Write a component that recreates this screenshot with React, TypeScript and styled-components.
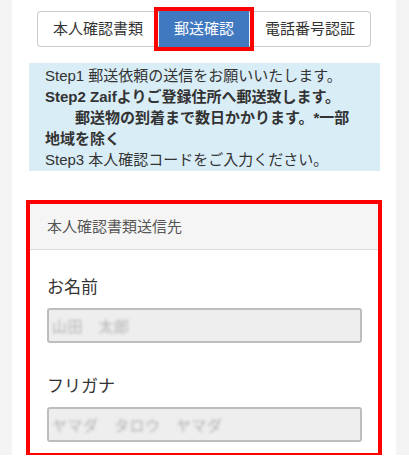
import React from "react";
import styled, { createGlobalStyle } from "styled-components";

const GlobalStyle = createGlobalStyle`
  html, body {
    margin: 0;
    padding: 0;
    background: #ffffff;
  }
  body {
    font-family: "Liberation Sans", "Noto Sans CJK JP", sans-serif;
    color: #333333;
  }
`;

const Page = styled.div`
  background: #f4f4f4;
  height: 455px;
  padding: 0 13px 0 12px;
`;

const Column = styled.main`
  background: #ffffff;
  height: 100%;
  padding-top: 11px;
  box-sizing: border-box;
  display: flex;
  flex-direction: column;
  align-items: center;
`;

const TabGroup = styled.div`
  display: flex;
  height: 36px;
`;

const Tab = styled.button<{ $active?: boolean; $pos: "first" | "mid" | "last" }>`
  font-family: "Liberation Sans", "Noto Sans CJK JP", sans-serif;
  font-size: 15px;
  line-height: 20px;
  padding: 0 15px;
  margin: 0;
  box-sizing: border-box;
  height: 36px;
  cursor: pointer;
  background: ${(p) => (p.$active ? "#4079c0" : "#ffffff")};
  color: ${(p) => (p.$active ? "#ffffff" : "#333333")};
  border: 1px solid ${(p) => (p.$active ? "#4079c0" : "#cccccc")};
  border-left-color: ${(p) => (p.$active ? "#eef3fa" : "#cccccc")};
  border-right-color: ${(p) => (p.$active ? "#eef3fa" : "#cccccc")};
  border-radius: ${(p) =>
    p.$pos === "first" ? "4px 0 0 4px" : p.$pos === "last" ? "0 4px 4px 0" : "0"};
  ${(p) => (p.$pos === "last" ? "border-left: none;" : "")}
  ${(p) => (p.$pos === "first" ? "border-right: none;" : "")}
  outline: ${(p) => (p.$active ? "4px solid #ff0000" : "none")};
  outline-offset: 0;
  position: relative;
  z-index: ${(p) => (p.$active ? 1 : 0)};
`;

const InfoBox = styled.div`
  margin-top: 16px;
  align-self: stretch;
  margin-left: 17px;
  margin-right: 16px;
  background: #d9edf7;
  padding: 2px 16px 1px 16px;
  font-size: 15px;
  line-height: 21px;
  color: #333333;
`;

const StepLine = styled.div<{ $bold?: boolean }>`
  font-weight: ${(p) => (p.$bold ? 700 : 400)};
  white-space: nowrap;
`;

const Card = styled.section`
  margin-top: 29px;
  align-self: stretch;
  margin-left: 14px;
  margin-right: 14px;
  border: 4px solid #ff0000;
  background: #ffffff;
`;

const CardHeader = styled.div`
  background: #f5f5f5;
  border-bottom: 1px solid #dddddd;
  padding: 12px 17px;
  font-size: 15px;
  line-height: 21px;
  color: #555555;
`;

const CardBody = styled.div`
  padding: 26px 16px 11px 17px;
  display: flex;
  flex-direction: column;
`;

const Field = styled.div<{ $gap?: boolean }>`
  display: flex;
  flex-direction: column;
  margin-top: ${(p) => (p.$gap ? "32px" : "0")};
`;

const Label = styled.label`
  font-size: 17px;
  line-height: 24px;
  color: #333333;
  margin-bottom: 8px;
`;

const Input = styled.div`
  height: 35px;
  box-sizing: border-box;
  background: #eeeeee;
  border: 2px solid #bdbdbd;
  border-radius: 3px;
  display: flex;
  align-items: center;
  padding-left: 3px;
  overflow: hidden;
`;

const Masked = styled.span`
  font-size: 15px;
  color: #b0b0b0;
  filter: blur(1.4px);
  letter-spacing: 0.5px;
  white-space: nowrap;
`;

export default function App() {
  return (
    <>
      <GlobalStyle />
      <Page>
        <Column>
          <TabGroup>
            <Tab $pos="first">本人確認書類</Tab>
            <Tab $pos="mid" $active>
              郵送確認
            </Tab>
            <Tab $pos="last">電話番号認証</Tab>
          </TabGroup>
          <InfoBox>
            <StepLine>Step1 郵送依頼の送信をお願いいたします。</StepLine>
            <StepLine $bold>Step2 Zaifよりご登録住所へ郵送致します。</StepLine>
            <StepLine $bold>　　郵送物の到着まで数日かかります。*一部</StepLine>
            <StepLine $bold>地域を除く</StepLine>
            <StepLine>Step3 本人確認コードをご入力ください。</StepLine>
          </InfoBox>
          <Card>
            <CardHeader>本人確認書類送信先</CardHeader>
            <CardBody>
              <Field>
                <Label>お名前</Label>
                <Input>
                  <Masked>山田　太郎</Masked>
                </Input>
              </Field>
              <Field $gap>
                <Label>フリガナ</Label>
                <Input>
                  <Masked>ヤマダ　タロウ　ヤマダ</Masked>
                </Input>
              </Field>
            </CardBody>
          </Card>
        </Column>
      </Page>
    </>
  );
}
